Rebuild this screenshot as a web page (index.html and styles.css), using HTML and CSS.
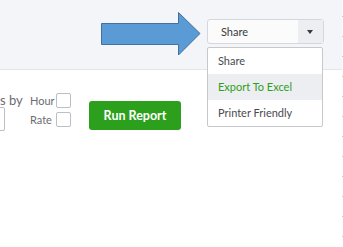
FILE: index.html
```html
<!DOCTYPE html>
<html>
<head>
<title>Report</title>
<link rel="stylesheet" href="styles.css">
</head>
<body>
	<div class="page">
		<div class="main">
			<header class="topbar">
				<svg class="arrow" width="100" height="44" viewBox="0 0 100 44">
					<path d="M0.5 11.5 H77.5 V0.5 L99 21.5 L77.5 43 V32.5 H0.5 Z" fill="#5b9bd5" stroke="#41719c" stroke-width="1"/>
				</svg>
				<div class="share">
					<div class="share-btn">
						<span class="share-label">Share</span>
						<span class="share-caret"></span>
					</div>
					<ul class="share-menu">
						<li>Share</li>
						<li class="active">Export To Excel</li>
						<li>Printer Friendly</li>
					</ul>
				</div>
			</header>
			<section class="controls">
				<div class="group">
					<span class="group-label">s by</span>
					<div class="group-input"></div>
				</div>
				<div class="checks">
					<span>Hour</span><span class="box"></span>
					<span>Rate</span><span class="box"></span>
				</div>
				<button class="run">Run Report</button>
			</section>
		</div>
		<div class="edge"></div>
	</div>
</body>
</html>
```

FILE: styles.css
```css
body {
	margin: 0;
	font-family: Lato, "Open Sans", sans-serif;
	color: #393a3d;
	background: #fff;
}
.page {
	display: flex;
	height: 247px;
}
.main {
	flex: 1;
}
.edge {
	width: 1px;
	background-image: repeating-linear-gradient(to bottom, transparent 0, transparent 16px, #c4c6c9 16px, #c4c6c9 17px, transparent 17px, transparent 20px);
}
.topbar {
	height: 70px;
	box-sizing: border-box;
	background-color: #f4f5f8;
	border-bottom: 1px solid #e3e5e8;
	display: flex;
	align-items: flex-start;
	padding-top: 12px;
}
.arrow {
	display: block;
	margin-left: 101px;
}
.share {
	position: relative;
	margin-left: 6px;
	margin-top: 7px;
}
.share-btn {
	display: flex;
	width: 117px;
	height: 25px;
	box-sizing: border-box;
	border: 1px solid #d4d7dc;
	border-radius: 3px;
	background: #fbfbfb;
	font-size: 11px;
}
.share-label {
	flex: 1;
	padding-left: 13px;
	line-height: 23px;
}
.share-caret {
	width: 25px;
	background: #eceef1;
	position: relative;
}
.share-caret::after {
	content: "";
	position: absolute;
	left: 9px;
	top: 10px;
	border-left: 3px solid transparent;
	border-right: 3px solid transparent;
	border-top: 4px solid #393a3d;
}
.share-menu {
	position: absolute;
	top: 28px;
	left: 0;
	width: 116px;
	margin: 0;
	padding: 0;
	list-style: none;
	background: #fff;
	border: 1px solid #c6c8cc;
	border-radius: 2px;
	font-size: 11px;
	color: #4a4b4f;
	box-sizing: border-box;
}
.share-menu li {
	height: 26px;
	line-height: 26px;
	padding-left: 10px;
}
.share-menu li.active {
	background: #eceef1;
	color: #2ca01c;
}
.controls {
	display: flex;
	align-items: flex-start;
	padding-top: 23px;
	font-size: 12px;
}
.group {
	width: 20px;
	display: flex;
	flex-direction: column;
}
.group-label {
	white-space: nowrap;
	font-size: 13px;
	line-height: 15px;
	color: #6b6c72;
}
.group-input {
	width: 40px;
	height: 24px;
	margin-top: -1px;
	margin-left: -35px;
	border: 1px solid #babec5;
	border-radius: 2px;
	box-sizing: border-box;
}
.checks {
	display: grid;
	grid-template-columns: 23px 15px;
	column-gap: 3px;
	row-gap: 4px;
	align-items: center;
	margin-left: 10px;
	font-size: 11px;
	color: #6b6c72;
}
.box {
	width: 15px;
	height: 15px;
	box-sizing: border-box;
	border: 1px solid #babec5;
	border-radius: 2px;
	background: #fff;
}
.run {
	margin-left: 18px;
	margin-top: 8px;
	width: 92px;
	height: 29px;
	border: none;
	border-radius: 3px;
	background-color: #2ca01c;
	color: #fff;
	font-family: Lato, sans-serif;
	font-weight: bold;
	font-size: 12.5px;
	padding: 0;
}
```
